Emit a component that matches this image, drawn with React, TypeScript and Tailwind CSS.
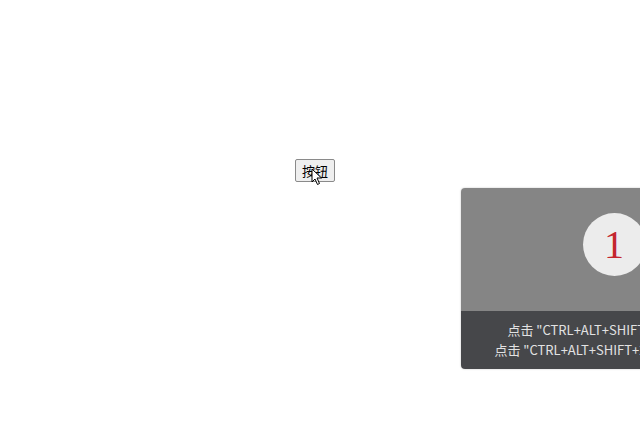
export default function App() {
  return (
    <div className="relative w-[640px] h-[435px] overflow-hidden bg-white" style={{ fontFamily: '"Noto Sans CJK SC", sans-serif' }}>
      {/* Trigger button */}
      <div className="pt-[159px] pl-[295px]">
        <button className="relative block h-[23px] w-[40px] border border-[#8a8a8a] bg-[#efefef] rounded-[2px] text-[13px] leading-none text-black">
          按钮
          <svg className="absolute left-[15px] top-[8px]" width="12" height="18" viewBox="0 0 12 18">
            <path d="M1 1 L1 14 L4 11 L6.5 16.5 L8.5 15.5 L6 10 L10.5 10 Z" fill="#fff" stroke="#000" strokeWidth="1" strokeLinejoin="round" />
          </svg>
        </button>
      </div>

      {/* Toast overlay */}
      <div className="absolute left-[461px] top-[188px] w-[306px] rounded-[4px] overflow-hidden shadow-[0_0_2px_rgba(0,0,0,0.25)]">
        <div className="h-[123px] bg-[#858585] flex justify-center pt-[25px]">
          <div className="w-[63px] h-[63px] rounded-full bg-[#ececec] flex items-center justify-center">
            <span className="text-[40px] leading-none text-[#c4262e]" style={{ fontFamily: '"Liberation Serif", serif' }}>1</span>
          </div>
        </div>
        <div className="h-[58px] bg-[#46474a] text-[#e2e2e2] text-[13px] leading-[20px] text-center pt-[9px]">
          <p>点击 "CTRL+ALT+SHIFT+1" 开始录制</p>
          <p>点击 "CTRL+ALT+SHIFT+2" 停止录制演示</p>
        </div>
      </div>
    </div>
  );
}
